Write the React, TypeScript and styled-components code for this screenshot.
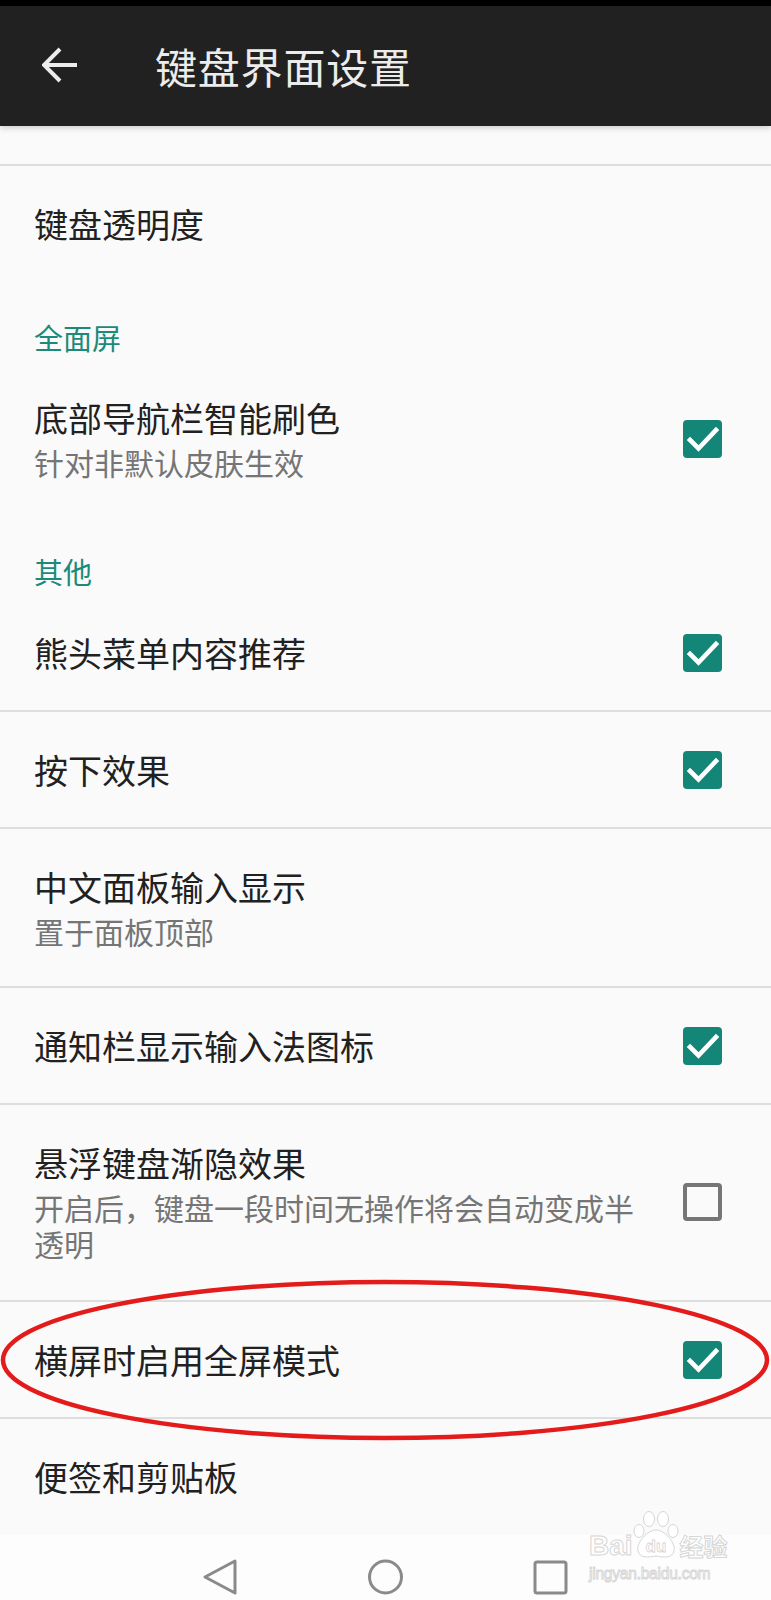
import styled, { createGlobalStyle } from 'styled-components';

const GlobalStyle = createGlobalStyle`
  html, body {
    margin: 0;
    padding: 0;
    background: #fafafa;
  }
  body {
    font-family: "Noto Sans CJK SC", "Noto Sans", sans-serif;
  }
  * { box-sizing: border-box; }
`;

const Page = styled.div`
  position: relative;
  width: 771px;
  height: 1600px;
  overflow: hidden;
  background: #fafafa;
  display: flex;
  flex-direction: column;
`;

const StatusBar = styled.div`
  height: 6px;
  background: #000;
`;

const Toolbar = styled.header`
  position: relative;
  z-index: 2;
  height: 120px;
  background: #212121;
  display: flex;
  align-items: center;
  padding-left: 42px;
  box-shadow: 0 2px 6px rgba(0, 0, 0, 0.18);
`;

const BackButton = styled.span`
  display: flex;
  width: 36px;
  height: 36px;
  margin-right: 77px;
  margin-top: -2px;
`;

const Title = styled.h1`
  margin: 0;
  font-size: 42px;
  font-weight: 400;
  color: #ececec;
  line-height: 1;
  letter-spacing: 0.8px;
`;

const List = styled.div`
  flex: 1;
  display: flex;
  flex-direction: column;
`;

const Spacer = styled.div<{ $h: number }>`
  height: ${(p) => p.$h}px;
`;

const Divider = styled.div`
  height: 2px;
  background: #dedede;
`;

const Category = styled.div<{ $top: number }>`
  padding: ${(p) => p.$top}px 34px 4px;
  font-size: 29px;
  line-height: 40px;
  color: #1b8a7b;
`;

const Row = styled.div<{ $top?: number; $bottom?: number }>`
  display: flex;
  align-items: center;
  gap: 30px;
  padding: ${(p) => p.$top ?? 37}px 49px ${(p) => p.$bottom ?? p.$top ?? 37}px 34px;
`;

const Texts = styled.div`
  flex: 1;
  display: flex;
  flex-direction: column;
  gap: 6px;
`;

const RowTitle = styled.div`
  font-size: 34px;
  line-height: 41px;
  color: #212121;
`;

const RowSummary = styled.div`
  font-size: 30px;
  line-height: 36px;
  color: #757575;
`;

const Box = styled.span<{ $checked: boolean }>`
  flex: none;
  width: 39px;
  height: 38px;
  border-radius: 4px;
  display: flex;
  background: ${(p) => (p.$checked ? '#148677' : 'transparent')};
  border: ${(p) => (p.$checked ? 'none' : '4px solid #767676')};
`;

const NavBar = styled.nav`
  height: 65px;
  background: #fdfdfd;
  display: flex;
  justify-content: center;
  align-items: flex-start;
  gap: 130px;
  padding-top: 24px;
`;

const NavIcon = styled.svg`
  width: 35px;
  height: 36px;
`;

const Ellipse = styled.svg`
  position: absolute;
  left: 0;
  top: 1278px;
  width: 771px;
  height: 165px;
  pointer-events: none;
`;

const Watermark = styled.div`
  position: absolute;
  left: 589px;
  top: 1510px;
  display: flex;
  flex-direction: column;
  align-items: flex-start;
  pointer-events: none;
  color: #ffffff;
  -webkit-text-stroke: 1px #d6d6d6;
  font-family: "Liberation Sans", Arial, sans-serif;
  font-weight: 700;
`;

const MarkLine = styled.div`
  display: flex;
  align-items: flex-end;
  font-size: 28px;
  line-height: 28px;
`;

const MarkCn = styled.span`
  font-family: "Noto Sans CJK SC", sans-serif;
  font-size: 24px;
  line-height: 28px;
  margin-left: 1px;
`;

const MarkUrl = styled.div`
  margin-top: 5px;
  font-size: 17px;
  line-height: 17px;
  font-weight: 400;
  letter-spacing: -0.3px;
  transform: scaleX(0.92);
  transform-origin: left;
`;

function Check({ checked }: { checked: boolean }) {
  return (
    <Box $checked={checked}>
      {checked && (
        <svg width="39" height="38" viewBox="0 0 39 38">
          <path
            d="M7 20 L15.5 28.5 L33 10"
            fill="none"
            stroke="#fff"
            strokeWidth="4.6"
            strokeLinecap="square"
          />
        </svg>
      )}
    </Box>
  );
}

type Pref = {
  title: string;
  summary?: string;
  checked?: boolean;
  top?: number;
  bottom?: number;
};

function PrefRow({ title, summary, checked, top, bottom }: Pref) {
  return (
    <Row $top={top} $bottom={bottom}>
      <Texts>
        <RowTitle>{title}</RowTitle>
        {summary && <RowSummary>{summary}</RowSummary>}
      </Texts>
      {checked !== undefined && <Check checked={checked} />}
    </Row>
  );
}

const others: Pref[] = [
  { title: '熊头菜单内容推荐', checked: true },
  { title: '按下效果', checked: true },
  { title: '中文面板输入显示', summary: '置于面板顶部' },
  { title: '通知栏显示输入法图标', checked: true },
  {
    title: '悬浮键盘渐隐效果',
    summary: '开启后，键盘一段时间无操作将会自动变成半透明',
    checked: false,
    top: 37,
    bottom: 39,
  },
  { title: '横屏时启用全屏模式', checked: true },
];

export default function App() {
  return (
    <>
      <GlobalStyle />
      <Page>
        <StatusBar />
        <Toolbar>
          <BackButton>
            <svg width="36" height="36" viewBox="0 0 36 36">
              <path
                d="M35 18 H3 M18 2 L2 18 L18 34"
                fill="none"
                stroke="#ececec"
                strokeWidth="4"
              />
            </svg>
          </BackButton>
          <Title>键盘界面设置</Title>
        </Toolbar>

        <List>
          <Spacer $h={38} />
          <Divider />
          <PrefRow title="键盘透明度" top={37} bottom={43} />

          <Category $top={30}>全面屏</Category>
          <PrefRow title="底部导航栏智能刷色" summary="针对非默认皮肤生效" checked top={36} bottom={38} />

          <Category $top={33}>其他</Category>
          {others.map((p) => (
            <div key={p.title}>
              <PrefRow {...p} />
              <Divider />
            </div>
          ))}
          <PrefRow title="便签和剪贴板" />
        </List>

        <NavBar>
          <NavIcon viewBox="0 0 35 36">
            <path
              d="M32 2 L2 18 L32 34 Z"
              fill="none"
              stroke="#8a8a8a"
              strokeWidth="3"
              strokeLinejoin="round"
            />
          </NavIcon>
          <NavIcon viewBox="0 0 35 36">
            <circle cx="17.5" cy="18" r="16" fill="none" stroke="#8a8a8a" strokeWidth="3" />
          </NavIcon>
          <NavIcon viewBox="0 0 35 36">
            <rect x="2" y="3" width="31" height="31" rx="2" fill="none" stroke="#8a8a8a" strokeWidth="3" />
          </NavIcon>
        </NavBar>

        <Ellipse viewBox="0 0 771 165">
          <ellipse
            cx="385"
            cy="82"
            rx="382"
            ry="78"
            fill="none"
            stroke="#e31b1b"
            strokeWidth="4.5"
          />
        </Ellipse>

        <Watermark>
          <MarkLine>
            <span>Bai</span>
            <svg width="46" height="50" viewBox="0 0 46 50">
              <g fill="#fff" stroke="#d6d6d6" strokeWidth="1">
                <ellipse cx="16" cy="9" rx="5.5" ry="7.5" />
                <ellipse cx="30" cy="9" rx="5.5" ry="7.5" />
                <ellipse cx="6" cy="21" rx="5" ry="6.5" />
                <ellipse cx="40" cy="21" rx="5" ry="6.5" />
                <path d="M23 20 C32 20 43 33 41 41 C39 49 30 47 23 46 C16 47 7 49 5 41 C3 33 14 20 23 20 Z" />
              </g>
              <text
                x="23"
                y="42"
                textAnchor="middle"
                fontSize="17"
                fontFamily="Liberation Sans, sans-serif"
                fontWeight="700"
                fill="#fff"
                stroke="#d6d6d6"
                strokeWidth="0.8"
              >
                du
              </text>
            </svg>
            <MarkCn>经验</MarkCn>
          </MarkLine>
          <MarkUrl>jingyan.baidu.com</MarkUrl>
        </Watermark>
      </Page>
    </>
  );
}
